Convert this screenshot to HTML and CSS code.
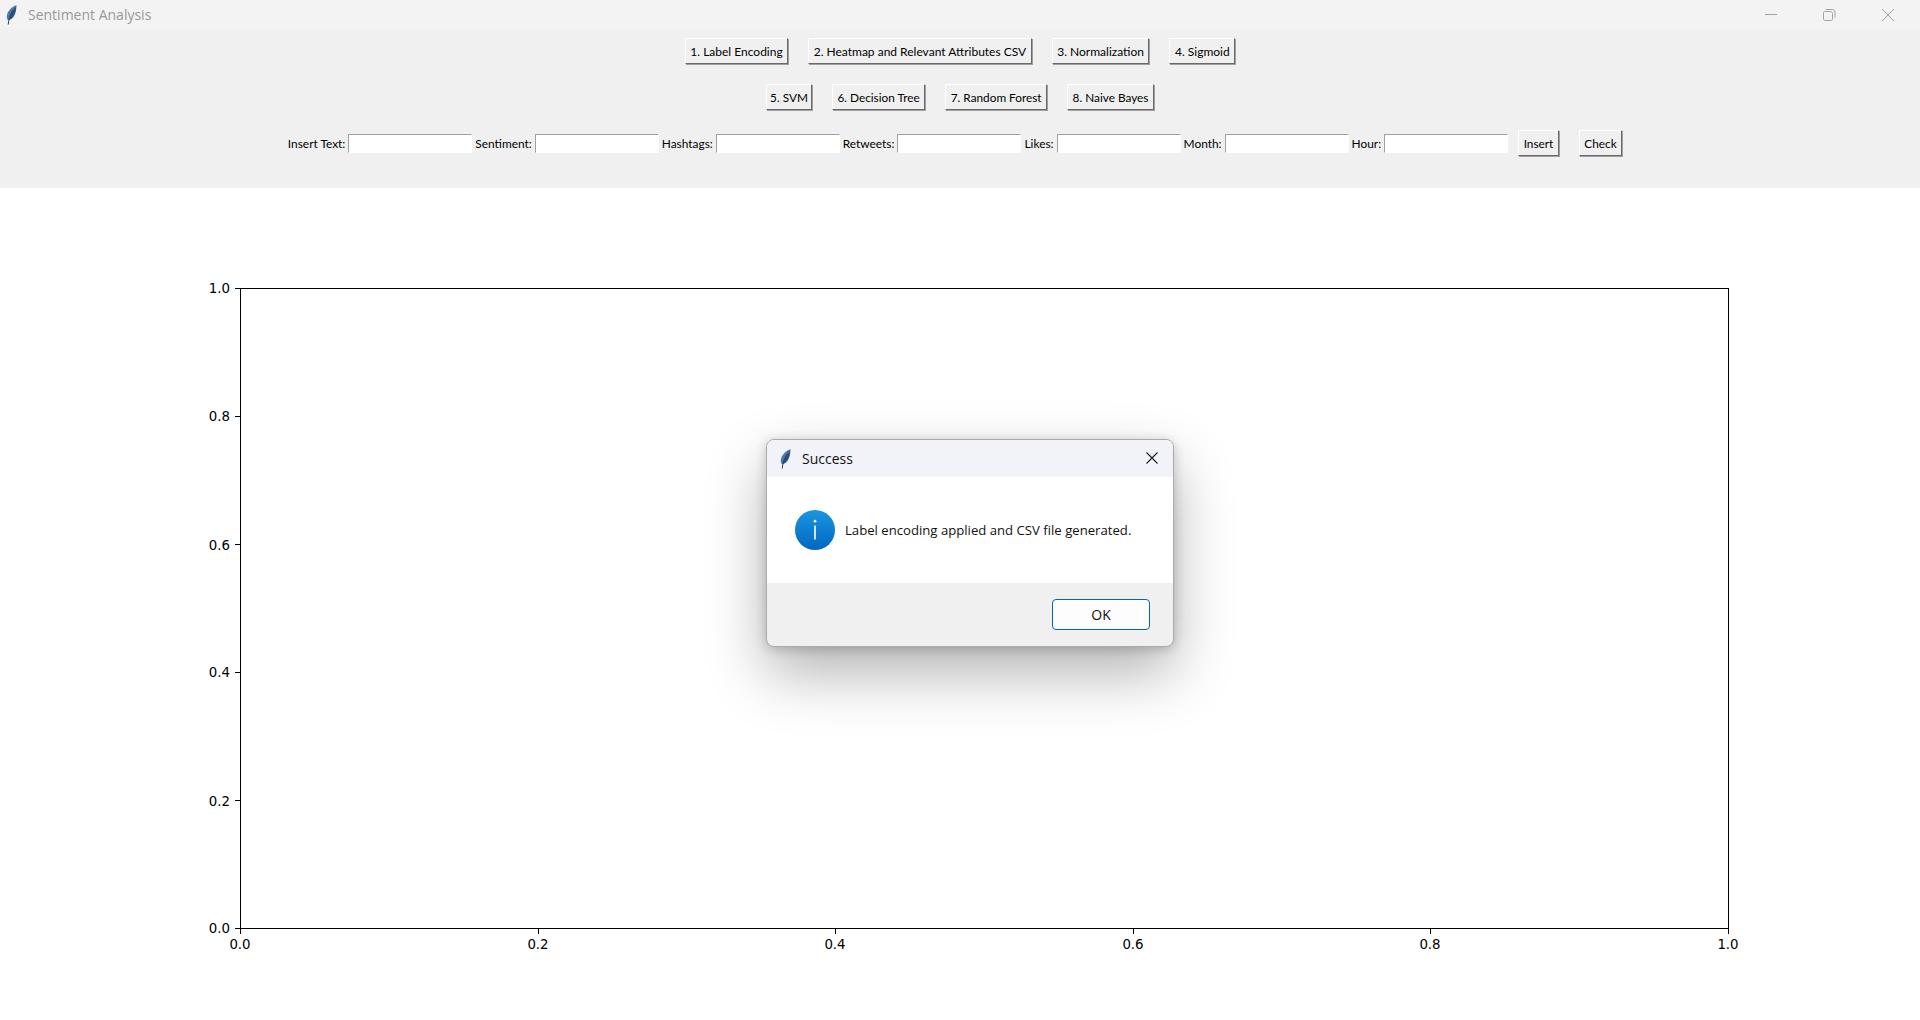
FILE: index.html
```html
<!DOCTYPE html>
<html lang="en">
<head>
<meta charset="utf-8">
<title>Sentiment Analysis</title>
<link rel="stylesheet" href="styles.css">
</head>
<body>
<svg class="defs" width="0" height="0" aria-hidden="true">
  <symbol id="feather" viewBox="0 0 11 20">
    <path d="M10.5 0.3C6 1.5 1.5 6 0.8 11C0.6 12.8 1.2 14.6 2.4 15.6C6 14.5 8.6 11 9.6 7C10.2 4.5 10.6 2 10.5 0.3Z" fill="#4a78ae"/>
    <path d="M10 1.4C7 4.6 4.4 9 3.2 14.8C6.2 13.6 8.4 10.6 9.3 7C9.8 5 10.1 3 10 1.4Z" fill="#2b4f7d"/>
    <path d="M7 5C5 8.6 3.4 12 2.8 15.5L2.2 19.6" fill="none" stroke="#3a3f46" stroke-width="1"/>
  </symbol>
</svg>
<div class="app">
  <header class="titlebar">
    <svg class="title-feather" width="11" height="20"><use href="#feather"/></svg>
    <span class="title-text">Sentiment Analysis</span>
    <div class="win-controls">
      <svg width="14" height="14" viewBox="0 0 14 14"><path d="M2 6.5H14" stroke="#a3a3a3" fill="none"/></svg>
      <svg width="14" height="14" viewBox="0 0 14 14"><path d="M2.5 3.5H8.5C9.5 3.5 10.5 4.5 10.5 5.5V11C10.5 11.8 9.8 12.5 9 12.5H3C2.2 12.5 1.5 11.8 1.5 11V4.5C1.5 4 2 3.5 2.5 3.5ZM4 1.5H10.5C12 1.5 13 2.5 13 4V9.5" stroke="#a3a3a3" fill="none"/></svg>
      <svg width="14" height="14" viewBox="0 0 14 14"><path d="M1 1L13 13M13 1L1 13" stroke="#a3a3a3" fill="none"/></svg>
    </div>
  </header>
  <section class="toolbar">
    <div class="row row-first">
      <button class="tk-btn">1. Label Encoding</button>
      <button class="tk-btn">2. Heatmap and Relevant Attributes CSV</button>
      <button class="tk-btn">3. Normalization</button>
      <button class="tk-btn">4. Sigmoid</button>
    </div>
    <div class="row">
      <button class="tk-btn tk-btn-tight">5. SVM</button>
      <button class="tk-btn">6. Decision Tree</button>
      <button class="tk-btn">7. Random Forest</button>
      <button class="tk-btn">8. Naive Bayes</button>
    </div>
    <div class="row row-form">
      <label class="tk-label">Insert Text:</label><span class="tk-input"></span>
      <label class="tk-label">Sentiment:</label><span class="tk-input"></span>
      <label class="tk-label">Hashtags:</label><span class="tk-input"></span>
      <label class="tk-label">Retweets:</label><span class="tk-input"></span>
      <label class="tk-label">Likes:</label><span class="tk-input"></span>
      <label class="tk-label">Month:</label><span class="tk-input"></span>
      <label class="tk-label">Hour:</label><span class="tk-input"></span>
      <button class="tk-btn">Insert</button>
      <button class="tk-btn">Check</button>
    </div>
  </section>
  <main class="plot-area">
    <svg class="plot" width="1920" height="832" viewBox="0 0 1920 832">
      <g class="axes">
        <rect x="240.5" y="100.5" width="1488" height="640"/>
        <path d="M240.5 741V746M538.5 741V746M835.5 741V746M1133.5 741V746M1430.5 741V746M1728.5 741V746"/>
        <path d="M235 740.5H240M235 612.5H240M235 484.5H240M235 356.5H240M235 228.5H240M235 100.5H240"/>
      </g>
      <g class="ylabels">
        <text x="230" y="745">0.0</text>
        <text x="230" y="618">0.2</text>
        <text x="230" y="489">0.4</text>
        <text x="230" y="362">0.6</text>
        <text x="230" y="233">0.8</text>
        <text x="230" y="105">1.0</text>
      </g>
      <g class="xlabels">
        <text x="240" y="761">0.0</text>
        <text x="538" y="761">0.2</text>
        <text x="835" y="761">0.4</text>
        <text x="1133" y="761">0.6</text>
        <text x="1430" y="761">0.8</text>
        <text x="1728" y="761">1.0</text>
      </g>
    </svg>
  </main>
  <div class="dialog" role="dialog">
    <div class="dialog-title">
      <svg class="dialog-feather" width="11" height="20"><use href="#feather"/></svg>
      <span class="dialog-name">Success</span>
      <svg class="dialog-close" width="14" height="14" viewBox="0 0 14 14"><path d="M1.5 1.5L12.5 12.5M12.5 1.5L1.5 12.5" stroke="#1a1a1a" stroke-width="1.1" fill="none"/></svg>
    </div>
    <div class="dialog-body">
      <svg class="info-icon" width="40" height="40" viewBox="0 0 40 40">
        <defs><linearGradient id="infoGrad" x1="0" y1="0" x2="0" y2="1"><stop offset="0" stop-color="#1b95e0"/><stop offset="1" stop-color="#0268c0"/></linearGradient></defs>
        <circle cx="20" cy="20" r="20" fill="url(#infoGrad)"/>
        <circle cx="20" cy="11.2" r="1.4" fill="#fff"/>
        <rect x="19.2" y="15.5" width="1.6" height="14" fill="#fff"/>
      </svg>
      <span class="dialog-msg">Label encoding applied and CSV file generated.</span>
    </div>
    <div class="dialog-foot">
      <button class="ok-btn">OK</button>
    </div>
  </div>
</div>
</body>
</html>
```
FILE: styles.css
```css
* { box-sizing: border-box; }
html, body { margin: 0; padding: 0; background: #fff; overflow: hidden; }
.defs { position: absolute; }
.app {
  position: relative;
  width: 1920px;
  height: 1020px;
  display: flex;
  flex-direction: column;
  font-family: "Open Sans", sans-serif;
}
.titlebar {
  height: 29px;
  background: #f3f3f3;
  display: flex;
  align-items: center;
  padding-left: 6px;
}
.title-feather { margin-right: 11px; }
.title-text { font-size: 14px; color: #999; }
.win-controls {
  margin-left: auto;
  display: flex;
  gap: 45px;
  padding-right: 25px;
}
.toolbar {
  height: 159px;
  background: #f0f0f0;
  padding-top: 9px;
  display: flex;
  flex-direction: column;
  gap: 20px;
}
.row {
  display: flex;
  justify-content: center;
  align-items: center;
  height: 26px;
}
.row-form { gap: 3px; }
.tk-btn {
  height: 26px;
  margin: 0 10px;
  padding: 0 4.5px;
  font: 11.8px Lato, sans-serif;
  color: #000;
  background: #f0f0f0;
  border: 1px solid;
  border-color: #fff #696969 #696969 #fff;
  box-shadow: 1px 1px 0 #a0a0a0;
  border-radius: 0;
}
.row-first .tk-btn { font-size: 12px; }
.tk-btn-tight { padding: 0 3px; }
.row-form .tk-btn { margin-left: 7px; }
.tk-label { font: 11.9px Lato, sans-serif; color: #000; }
.tk-input {
  width: 124px;
  height: 19px;
  background: #fff;
  border: 1px solid;
  border-color: #a0a0a0 #fff #fff #a0a0a0;
}
.plot-area { flex: 1; }
.plot { display: block; }
.axes rect, .axes path { fill: none; stroke: #000; stroke-width: 1; }
.plot text { font-family: "DejaVu Sans", sans-serif; font-size: 13.33px; fill: #000; }
.ylabels text { text-anchor: end; }
.xlabels text { text-anchor: middle; }
.dialog {
  position: absolute;
  left: 766px;
  top: 439px;
  width: 408px;
  height: 208px;
  background: #f0f0f0;
  border: 1px solid #ababab;
  border-radius: 8px;
  overflow: hidden;
  display: flex;
  flex-direction: column;
  box-shadow: 0 26px 60px rgba(0,0,0,.3), 0 2px 12px rgba(0,0,0,.2);
}
.dialog-title {
  height: 37px;
  background: #f1f3f8;
  display: flex;
  align-items: center;
  padding: 0 14px 0 13px;
  flex: none;
}
.dialog-feather { margin-right: 11px; }
.dialog-name { font-size: 14px; color: #111; }
.dialog-close { margin-left: auto; margin-bottom: 1px; }
.dialog-body {
  height: 106px;
  background: #fff;
  display: flex;
  align-items: center;
  padding-left: 28px;
  gap: 10px;
  flex: none;
}
.dialog-msg { font-size: 13.15px; color: #111; }
.dialog-foot {
  flex: 1;
  display: flex;
  justify-content: flex-end;
  align-items: flex-start;
  padding: 16px 23px 0 0;
}
.ok-btn {
  width: 98px;
  height: 31px;
  font: 14px "Open Sans", sans-serif;
  color: #111;
  background: #fdfdfd;
  border: 1px solid #0067c0;
  border-radius: 4px;
}
```
